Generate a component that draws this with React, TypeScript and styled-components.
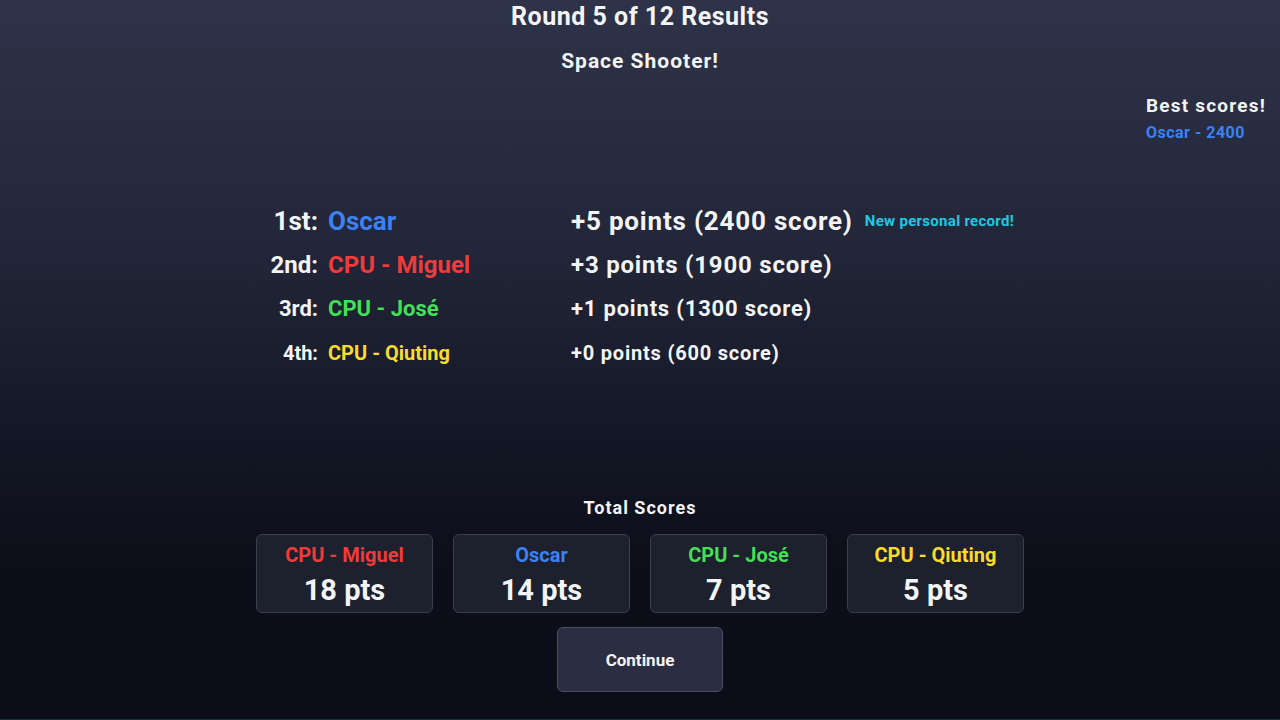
import React from 'react';
import styled, { createGlobalStyle } from 'styled-components';

const GlobalStyle = createGlobalStyle`
  html, body {
    margin: 0;
    padding: 0;
    background: #0c0e19;
  }
  * {
    box-sizing: border-box;
  }
`;

const Page = styled.div`
  width: 100%;
  height: 100vh;
  display: flex;
  flex-direction: column;
  align-items: stretch;
  background: linear-gradient(180deg, #2f3349 0%, #222638 35%, #131624 62%, #0c0e19 80%, #0b0d18 100%);
  border-bottom: 1px solid #12324a;
  font-family: Roboto, "Liberation Sans", sans-serif;
  font-weight: 700;
  color: #f3f4f6;
  padding-top: 1px;
  padding-bottom: 27px;
`;

const Header = styled.header`
  display: flex;
  flex-direction: column;
  align-items: center;
`;

const Title = styled.h1`
  margin: 0;
  font-size: 25px;
  line-height: 32px;
  font-weight: 700;
  letter-spacing: 0.5px;
`;

const Subtitle = styled.h2`
  margin: 15px 0 0;
  font-size: 21px;
  line-height: 26px;
  font-weight: 700;
  letter-spacing: 1px;
`;

const BestRow = styled.div`
  display: flex;
  justify-content: flex-end;
  padding-right: 14px;
  margin-top: 20px;
`;

const BestBox = styled.div`
  display: flex;
  flex-direction: column;
  gap: 5px;
`;

const BestTitle = styled.div`
  font-size: 19px;
  line-height: 24px;
  letter-spacing: 1.2px;
`;

const BestEntry = styled.div<{ $color: string }>`
  font-size: 16px;
  line-height: 20px;
  letter-spacing: 0.5px;
  color: ${p => p.$color};
`;

const Results = styled.div`
  display: grid;
  grid-template-columns: 58px 233px auto;
  column-gap: 10px;
  margin: 56px 0 0 260px;
`;

const Rank = styled.div<{ $size: number }>`
  font-size: ${p => p.$size}px;
  line-height: 44px;
  text-align: right;
  white-space: nowrap;
`;

const Name = styled.div<{ $size: number; $color: string }>`
  font-size: ${p => p.$size}px;
  line-height: 44px;
  color: ${p => p.$color};
  white-space: nowrap;
`;

const Points = styled.div<{ $size: number }>`
  font-size: ${p => p.$size}px;
  line-height: 44px;
  letter-spacing: 0.8px;
  white-space: nowrap;
  display: flex;
  align-items: center;
  gap: 12px;
`;

const Record = styled.span`
  font-size: 15px;
  letter-spacing: 0.3px;
  color: #22c7e4;
`;

const Spacer = styled.div`
  flex: 1;
`;

const TotalsLabel = styled.div`
  text-align: center;
  font-size: 18px;
  line-height: 22px;
  letter-spacing: 1px;
`;

const Cards = styled.div`
  display: flex;
  justify-content: center;
  gap: 20px;
  margin-top: 15px;
`;

const Card = styled.div`
  width: 177px;
  height: 79px;
  background: #1d202d;
  border: 1px solid #3b3f4e;
  border-radius: 6px;
  display: flex;
  flex-direction: column;
  align-items: center;
  padding-top: 8px;
`;

const CardName = styled.div<{ $color: string }>`
  font-size: 20px;
  line-height: 24px;
  color: ${p => p.$color};
`;

const CardPts = styled.div`
  font-size: 29px;
  line-height: 34px;
  margin-top: 6px;
`;

const ButtonRow = styled.div`
  display: flex;
  justify-content: center;
  margin-top: 14px;
`;

const ContinueButton = styled.button`
  width: 166px;
  height: 65px;
  background: #2b2e42;
  border: 1px solid #4a4e60;
  border-radius: 6px;
  color: #f3f4f6;
  font-family: inherit;
  font-weight: 700;
  font-size: 17px;
  cursor: pointer;
`;

const BLUE = '#3b82f6';
const RED = '#ef3b3b';
const GREEN = '#43df56';
const YELLOW = '#f8dc2a';

const results = [
  { rank: '1st:', name: 'Oscar', color: BLUE, points: '+5 points (2400 score)', size: 26, record: true },
  { rank: '2nd:', name: 'CPU - Miguel', color: RED, points: '+3 points (1900 score)', size: 24, record: false },
  { rank: '3rd:', name: 'CPU - José', color: GREEN, points: '+1 points (1300 score)', size: 22, record: false },
  { rank: '4th:', name: 'CPU - Qiuting', color: YELLOW, points: '+0 points (600 score)', size: 20, record: false },
];

const totals = [
  { name: 'CPU - Miguel', color: RED, pts: 18 },
  { name: 'Oscar', color: BLUE, pts: 14 },
  { name: 'CPU - José', color: GREEN, pts: 7 },
  { name: 'CPU - Qiuting', color: YELLOW, pts: 5 },
];

const App: React.FC = () => {
  return (
    <>
      <GlobalStyle />
      <Page>
        <Header>
          <Title>Round 5 of 12 Results</Title>
          <Subtitle>Space Shooter!</Subtitle>
        </Header>

        <BestRow>
          <BestBox>
            <BestTitle>Best scores!</BestTitle>
            <BestEntry $color={BLUE}>Oscar - 2400</BestEntry>
          </BestBox>
        </BestRow>

        <Results>
          {results.map(r => (
            <React.Fragment key={r.rank}>
              <Rank $size={r.size}>{r.rank}</Rank>
              <Name $size={r.size} $color={r.color}>{r.name}</Name>
              <Points $size={r.size}>
                {r.points}
                {r.record && <Record>New personal record!</Record>}
              </Points>
            </React.Fragment>
          ))}
        </Results>

        <Spacer />

        <TotalsLabel>Total Scores</TotalsLabel>
        <Cards>
          {totals.map(t => (
            <Card key={t.name}>
              <CardName $color={t.color}>{t.name}</CardName>
              <CardPts>{t.pts} pts</CardPts>
            </Card>
          ))}
        </Cards>
        <ButtonRow>
          <ContinueButton>Continue</ContinueButton>
        </ButtonRow>
      </Page>
    </>
  );
};

export default App;
